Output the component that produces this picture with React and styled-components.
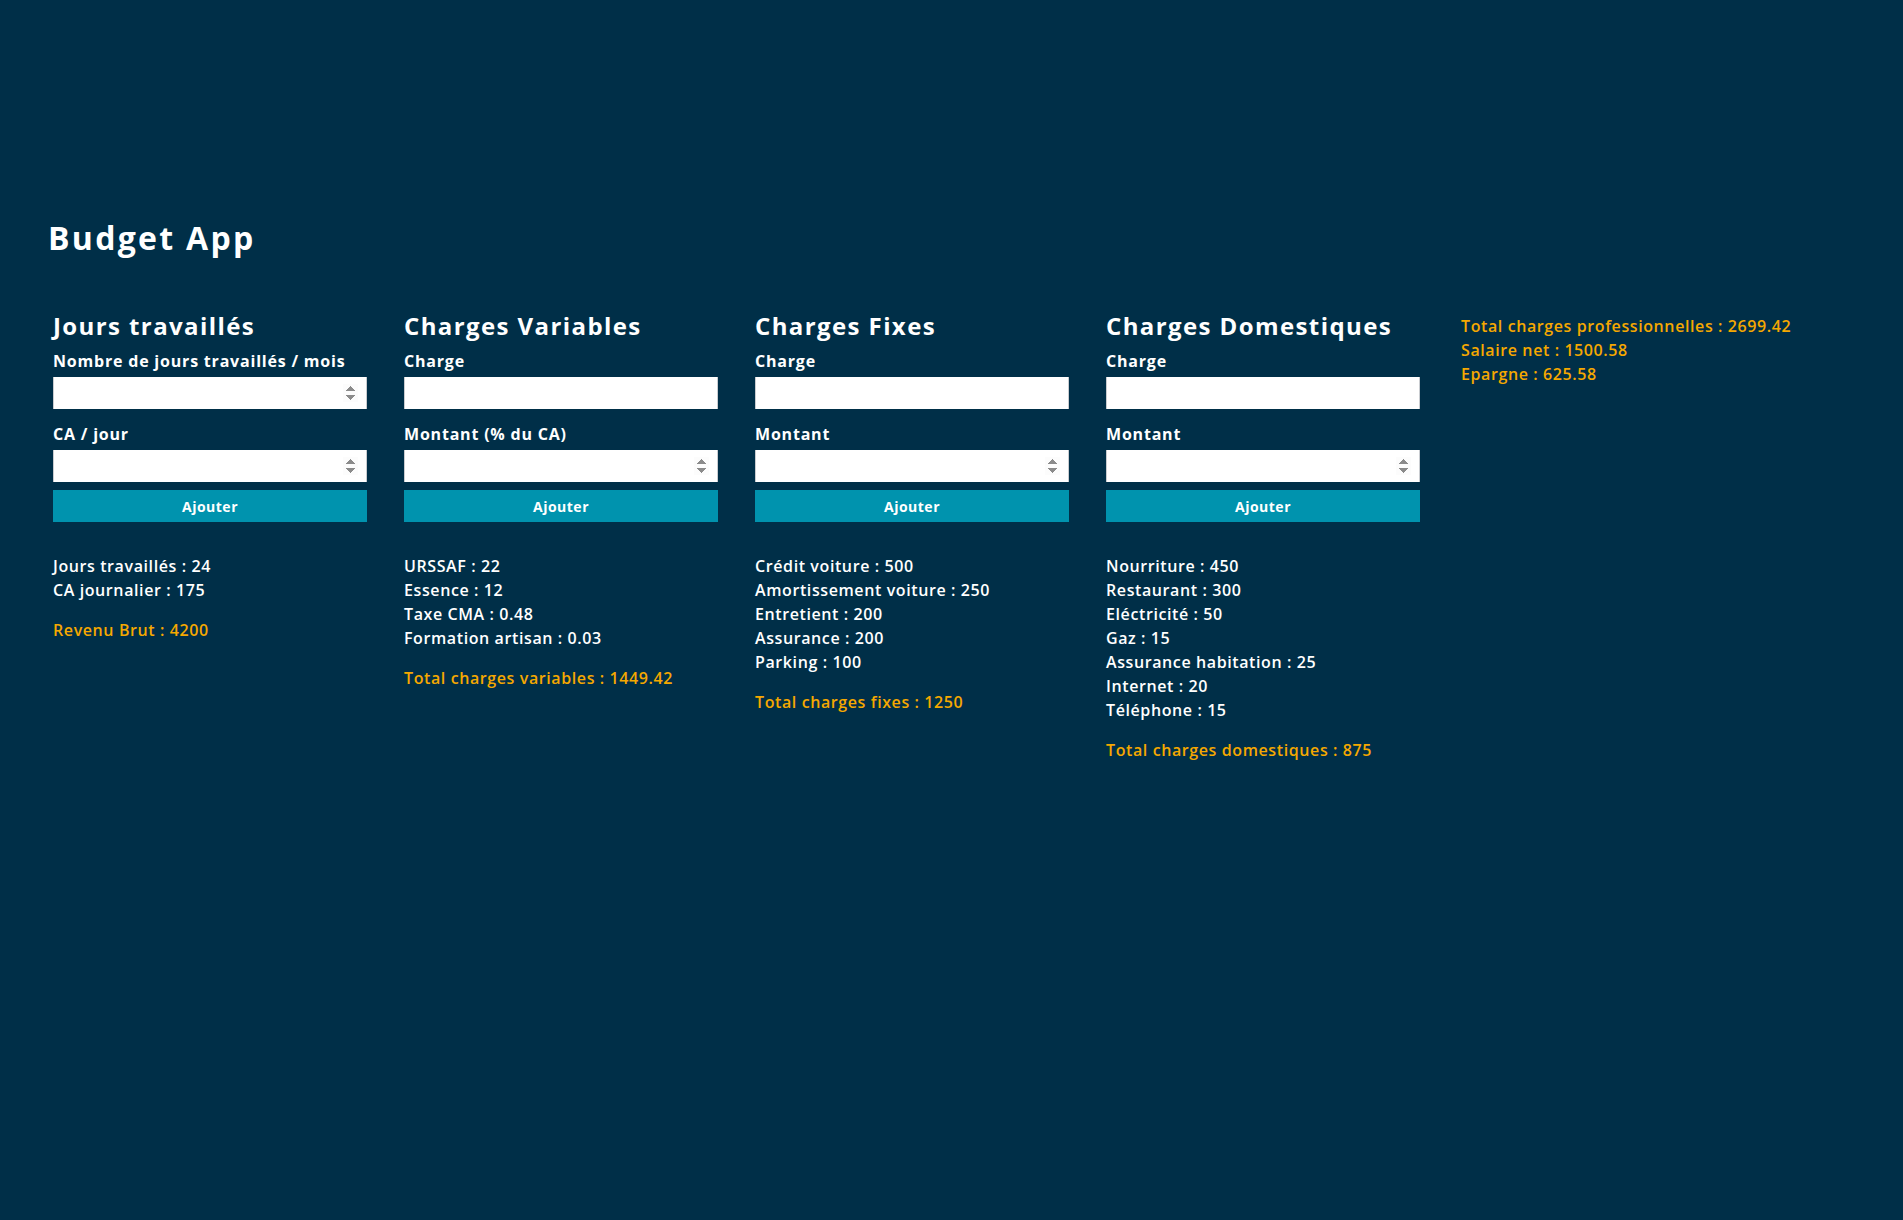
import React from 'react';
import styled, { createGlobalStyle } from 'styled-components';

const GlobalStyle = createGlobalStyle`
  body {
    margin: 0;
    background: #002f48;
    font-family: "Open Sans", "DejaVu Sans", sans-serif;
    color: #fff;
  }
  input[type=number]::-webkit-inner-spin-button {
    opacity: 1;
  }
`

const Page = styled.div`
  min-height: 1220px;
  padding: 218px 0 0 48px;
  box-sizing: border-box;
`

const Title = styled.h1`
  margin: 0;
  font-size: 32px;
  font-weight: 700;
  line-height: 40px;
  letter-spacing: 2.3px;
`

const Board = styled.div`
  display: flex;
  align-items: flex-start;
  gap: 37px;
  margin-top: 52px;
  padding-left: 5px;
`

const Column = styled.section`
  width: 314px;
  display: flex;
  flex-direction: column;
`

const Heading = styled.h2`
  margin: 0;
  font-size: 24px;
  font-weight: 700;
  line-height: 32px;
  letter-spacing: 1.4px;
`

const Label = styled.label`
  display: block;
  font-size: 16px;
  font-weight: 700;
  line-height: 22px;
  letter-spacing: 0.8px;
  margin: 14px 0 5px;
  &:first-of-type {
    margin-top: 8px;
  }
`

const Input = styled.input`
  box-sizing: border-box;
  width: 100%;
  height: 32px;
  border: none;
  border-left: 1px solid #c9ccd0;
  border-right: 1px solid #c9ccd0;
  padding: 0 8px;
  background: #fff;
  font-family: inherit;
  font-size: 14px;
`

const Button = styled.button`
  margin-top: 8px;
  height: 32px;
  width: 100%;
  border: none;
  background: #0093ae;
  color: #fff;
  font-family: inherit;
  font-size: 14px;
  font-weight: 700;
  letter-spacing: 0.5px;
  cursor: pointer;
`

const List = styled.ul`
  list-style: none;
  margin: 32px 0 0;
  padding: 0;
`

const Item = styled.li`
  font-size: 16px;
  font-weight: 600;
  line-height: 24px;
  letter-spacing: 0.6px;
`

const Total = styled.p`
  margin: ${p => (p.$first ? '0' : '16px')} 0 0;
  font-size: 16px;
  font-weight: 600;
  line-height: 24px;
  letter-spacing: 0.6px;
  color: #f5a800;
`

const Summary = styled.div`
  margin-left: 4px;
  padding-top: 4px;
`

const sections = [
  {
    title: 'Jours travaillés',
    fields: [
      { label: 'Nombre de jours travaillés / mois', type: 'number' },
      { label: 'CA / jour', type: 'number' },
    ],
    items: [['Jours travaillés', 24], ['CA journalier', 175]],
    total: ['Revenu Brut', 4200],
  },
  {
    title: 'Charges Variables',
    fields: [
      { label: 'Charge', type: 'text' },
      { label: 'Montant (% du CA)', type: 'number' },
    ],
    items: [['URSSAF', 22], ['Essence', 12], ['Taxe CMA', 0.48], ['Formation artisan', 0.03]],
    total: ['Total charges variables', 1449.42],
  },
  {
    title: 'Charges Fixes',
    fields: [
      { label: 'Charge', type: 'text' },
      { label: 'Montant', type: 'number' },
    ],
    items: [
      ['Crédit voiture', 500],
      ['Amortissement voiture', 250],
      ['Entretient', 200],
      ['Assurance', 200],
      ['Parking', 100],
    ],
    total: ['Total charges fixes', 1250],
  },
  {
    title: 'Charges Domestiques',
    fields: [
      { label: 'Charge', type: 'text' },
      { label: 'Montant', type: 'number' },
    ],
    items: [
      ['Nourriture', 450],
      ['Restaurant', 300],
      ['Eléctricité', 50],
      ['Gaz', 15],
      ['Assurance habitation', 25],
      ['Internet', 20],
      ['Téléphone', 15],
    ],
    total: ['Total charges domestiques', 875],
  },
]

const summary = [
  ['Total charges professionnelles', 2699.42],
  ['Salaire net', 1500.58],
  ['Epargne', 625.58],
]

const App = () => (
  <Page>
    <GlobalStyle />
    <Title>Budget App</Title>
    <Board>
      {sections.map(section => (
        <Column key={section.title}>
          <Heading>{section.title}</Heading>
          {section.fields.map(field => (
            <React.Fragment key={field.label}>
              <Label>{field.label}</Label>
              <Input type={field.type} />
            </React.Fragment>
          ))}
          <Button>Ajouter</Button>
          <List>
            {section.items.map(([name, value]) => (
              <Item key={name}>{name} : {value}</Item>
            ))}
          </List>
          <Total>{section.total[0]} : {section.total[1]}</Total>
        </Column>
      ))}
      <Summary>
        {summary.map(([name, value]) => (
          <Total key={name} $first>{name} : {value}</Total>
        ))}
      </Summary>
    </Board>
  </Page>
)

export default App
